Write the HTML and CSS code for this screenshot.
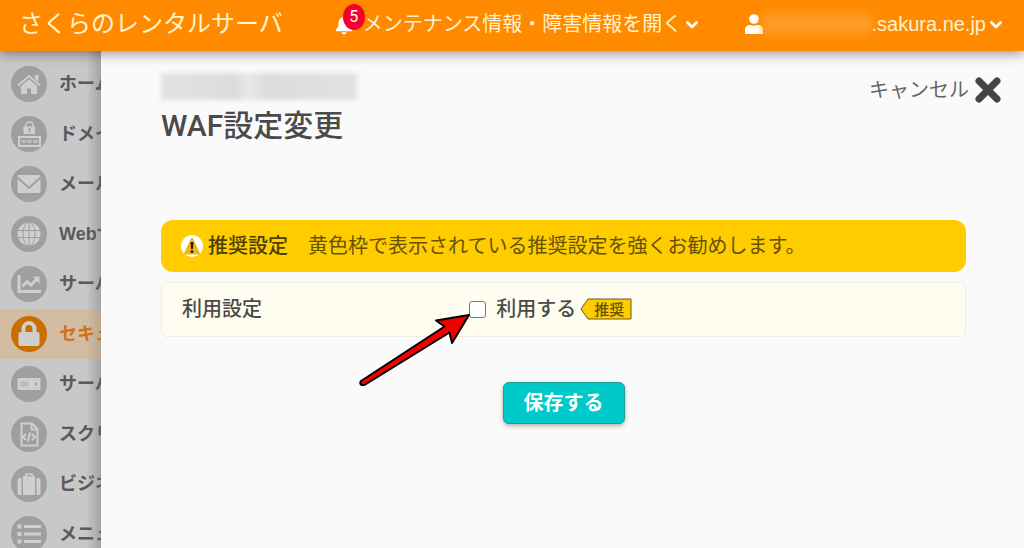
FILE: index.html
```html
<!DOCTYPE html>
<html lang="ja">
<head>
<meta charset="utf-8">
<meta name="viewport" content="width=device-width, initial-scale=1">
<title>WAF設定変更</title>
<link rel="stylesheet" href="styles.css">
</head>
<body>
<header class="topbar">
  <a class="brand" href="#">さくらのレンタルサーバ</a>
  <button class="top-item notice" type="button">
    <span class="bell">
      <svg width="20" height="20" viewBox="0 0 20 22"><path fill="#fff" d="M10 1c1 0 1.600.7 1.600 1.700 2.900.7 4.400 3 4.400 6 0 4 1 5.600 2.800 7.300.7.800.3 1.800-.8 1.800H2c-1.100 0-1.500-1-.8-1.800C3 14.300 4 12.700 4 8.700c0-3 1.500-5.300 4.400-6C8.400 1.700 9 1 10 1zM7.300 19h5.400c0 1.500-1.200 2.500-2.700 2.500S7.300 20.500 7.300 19z"/></svg>
      <span class="badge">5</span>
    </span>
    <span>メンテナンス情報・障害情報を開く</span>
    <svg class="chevron" width="12" height="8" viewBox="0 0 12 8"><path d="M1.500 1.500 6 6l4.500-4.500" fill="none" stroke="#fff" stroke-width="2.800" stroke-linecap="round" stroke-linejoin="round"/></svg>
  </button>
  <button class="top-item account" type="button">
    <svg width="18" height="20" viewBox="0 0 18 20"><circle cx="9" cy="5" r="4.800" fill="#fff"/><path fill="#fff" d="M0 20v-4c0-3 2-5 5-5h.6c2.200 1 4.600 1 6.800 0h.6c3 0 5 2 5 5v4z"/></svg>
    <span class="masked-account"></span>
    <span>.sakura.ne.jp</span>
    <svg class="chevron" width="12" height="8" viewBox="0 0 12 8"><path d="M1.500 1.500 6 6l4.500-4.500" fill="none" stroke="#fff" stroke-width="2.800" stroke-linecap="round" stroke-linejoin="round"/></svg>
  </button>
</header>
<div class="layout">
  <nav class="sidebar">
    <a class="nav-item" href="#"><svg class="nav-icon" viewBox="0 0 36 36"><circle class="disc" cx="18" cy="18" r="18"/><path class="glyph" d="M18 13 26 20v8h-6v-5.500h-4V28h-6v-8z"/><path d="M7 19.500 18 10l11 9.500" class="line"/><path class="glyph" d="M24 9h3.500v7L24 13z"/></svg>ホーム</a>
    <a class="nav-item" href="#"><svg class="nav-icon" viewBox="0 0 36 36"><circle class="disc" cx="18" cy="18" r="18"/><path class="glyph" fill-rule="evenodd" d="M13 10.500h1V9.700a4.500 4.500 0 0 1 9 0v.8h1V18H12.500v-7.500zM15.500 10.500h6V9.700a3 3 0 0 0-6 0zM18.500 12a1.300 1.300 0 0 0-.6 2.400V16.500h1.200V14.400a1.300 1.300 0 0 0-.6-2.400zM7 20h23v11H7zM9 22v7h19v-7z"/><path d="m10.500 24 1 3 1-3 1 3 1-3m2 0 1 3 1-3 1 3 1-3m2 0 1 3 1-3 1 3 1-3" class="thin"/></svg>ドメイン</a>
    <a class="nav-item" href="#"><svg class="nav-icon" viewBox="0 0 36 36"><circle class="disc" cx="18" cy="18" r="18"/><rect class="glyph" x="6.500" y="9" width="23" height="18" rx="1"/><path d="M6.500 11.500 18 22l11.500-10.500" class="cut"/></svg>メール</a>
    <a class="nav-item" href="#"><svg class="nav-icon" viewBox="0 0 36 36"><circle class="disc" cx="18" cy="18" r="18"/><circle class="glyph" cx="18" cy="18" r="11.500"/><path d="M18 6v24M6 14.500h24M6 21.500h24" class="fine-cut"/><ellipse cx="18" cy="18" rx="6" ry="12" class="fine-cut"/></svg>Webサイト</a>
    <a class="nav-item" href="#"><svg class="nav-icon" viewBox="0 0 36 36"><circle class="disc" cx="18" cy="18" r="18"/><path class="bold-line" d="M8 9v16.500h22"/><path d="m11.500 20.500 4.500-5 4 3.500 6-6" class="bold-line"/><path class="glyph" d="M21.500 10.500H28.500v7z"/></svg>サーバ</a>
    <a class="nav-item active" href="#"><svg class="nav-icon" viewBox="0 0 36 36"><circle class="disc" cx="18" cy="18" r="18"/><rect class="glyph" x="7.500" y="16" width="21" height="14" rx="2"/><path d="M12.500 17v-4.500a5.500 5.500 0 0 1 11 0V17" class="lock-line"/></svg>セキュリティ</a>
    <a class="nav-item" href="#"><svg class="nav-icon" viewBox="0 0 36 36"><circle class="disc" cx="18" cy="18" r="18"/><rect class="glyph" x="6.500" y="12" width="23" height="12"/><path class="thin-cut" d="M10 16h3v4h-3zM14.500 16h2.500v4h-2.500z"/><circle cx="25" cy="18" r="1.300" class="disc"/></svg>サーバー</a>
    <a class="nav-item" href="#"><svg class="nav-icon" viewBox="0 0 36 36"><circle class="disc" cx="18" cy="18" r="18"/><path d="M10.500 7.500H21l5.500 5.500v16.500h-16zM20.500 7.500V13.500H26" class="line"/><path d="m15 18-3 3 3 3m6-6 3 3-3 3m-2-7.500-2 9" class="line"/></svg>スクリプト</a>
    <a class="nav-item" href="#"><svg class="nav-icon" viewBox="0 0 36 36"><circle class="disc" cx="18" cy="18" r="18"/><path class="glyph" d="M12 10h2V7.500h8V10h2v19H12zM6.500 14q0-2 2-2h2v17h-2q-2 0-2-2zM25.500 12h2q2 0 2 2v13q0 2-2 2h-2z"/><path class="disc" d="M15.500 9h5v1.200h-5z"/></svg>ビジネス</a>
    <a class="nav-item" href="#"><svg class="nav-icon" viewBox="0 0 36 36"><circle class="disc" cx="18" cy="18" r="18"/><path class="glyph" d="M6.500 8.500h4v4h-4zM6.500 16h4v4h-4zM6.500 23.500h4v4h-4zM13 9h17v3H13zM13 16.500h17v3H13zM13 24h17v3H13z"/></svg>メニュー</a>
  </nav>
  <main class="panel">
    <div class="panel-head">
      <div>
        <div class="masked-domain"></div>
        <h1 class="title">WAF設定変更</h1>
      </div>
      <button class="cancel" type="button">キャンセル
        <svg width="28" height="28" viewBox="0 0 28 28"><path d="m5 5 18 18M23 5 5 23" stroke="#444" stroke-width="7" stroke-linecap="round"/></svg>
      </button>
    </div>
    <div class="recommend">
      <svg width="22" height="24" viewBox="0 0 22 24"><circle cx="11" cy="12" r="11" fill="#fff"/><path d="M11 5 18 19.500H4z" fill="#edb51c" stroke="#edb51c" stroke-width="2" stroke-linejoin="round"/><path d="M9.500 8h3l-.6 7h-1.800z" fill="#2b2300"/><circle cx="11" cy="17.500" r="1.500" fill="#2b2300"/></svg>
      <strong class="recommend-title">推奨設定</strong>
      <span>黄色枠で表示されている推奨設定を強くお勧めします。</span>
    </div>
    <div class="setting">
      <div class="setting-name">利用設定</div>
      <div class="setting-value">
        <input class="check" type="checkbox" id="use-waf">
        <label for="use-waf">利用する</label>
        <span class="tag"><svg class="tag-shape" width="52" height="22" viewBox="0 0 52 22"><path d="M1 11 8 1h43v20H8z" fill="#fc0" stroke="#665a20"/></svg><span class="tag-text">推奨</span></span>
        <svg class="arrow" width="114" height="76" viewBox="0 0 114 76"><path d="M110 5 77 10.500l8.500 6L2 71q-1.500 2 0 3.500 1.500 1.500 3.500.5L90.500 22.500 93 33z" fill="#f00000" stroke="#000" stroke-width="2" stroke-linejoin="round"/></svg>
      </div>
    </div>
    <button class="save" type="button">保存する</button>
  </main>
</div>
</body>
</html>
```
FILE: styles.css
```css
* { box-sizing: border-box; }
body {
  margin: 0;
  height: 100vh;
  display: flex;
  flex-direction: column;
  overflow: hidden;
  background: #fafafa;
  color: #4a4a4a;
  font: 20px/30px Roboto, "Noto Sans CJK JP", sans-serif;
}
button {
  font: inherit;
  color: inherit;
  background: none;
  border: 0;
  padding: 0;
  cursor: pointer;
}
a { color: inherit; text-decoration: none; }
svg { flex: none; }

.topbar {
  position: relative;
  z-index: 2;
  flex: none;
  display: flex;
  align-items: center;
  height: 51px;
  padding: 0 22px 4px 19px;
  background: #ff8a00;
  color: #fff3cf;
  box-shadow: 0 2px 12px rgba(0, 0, 0, .45);
  white-space: nowrap;
}
.brand { font-size: 24px; }
.top-item { display: flex; align-items: center; }
.notice { margin-left: 51px; }
.bell { position: relative; display: flex; margin-right: 9px; padding-top: 3px; }
.badge {
  position: absolute;
  left: 9px;
  top: -8px;
  width: 22px;
  height: 26px;
  border-radius: 50%;
  background: #f5002d;
  color: #fff;
  font-size: 16px;
  line-height: 26px;
  text-align: center;
}
.chevron { margin: 2px 0 0 4px; }
.account { margin-left: auto; font-family: "Liberation Sans", "Noto Sans CJK JP", sans-serif; }
.masked-account {
  width: 108px;
  height: 20px;
  background: #ff9d2b;
  filter: blur(4px);
}

.layout { flex: 1; display: flex; min-height: 0; }
.sidebar {
  flex: none;
  width: 101px;
  padding-top: 8px;
  overflow: hidden;
  background: linear-gradient(90deg, transparent 86px, rgba(0, 0, 0, .18)), #c8c8c8;
}
.nav-item {
  display: flex;
  align-items: center;
  gap: 12px;
  height: 50px;
  padding-left: 11px;
  color: #5a5a5a;
  font-family: "Liberation Sans", "Noto Sans CJK JP", sans-serif;
  font-size: 18px;
  font-weight: 700;
  white-space: nowrap;
}
.nav-icon { width: 36px; height: 36px; }
.nav-item.active {
  background: linear-gradient(90deg, transparent 86px, rgba(0, 0, 0, .12)), #d3bda2;
  color: #d0711a;
}
.disc { fill: #9f9f9f; }
.active .disc { fill: #cc6d00; }
.glyph { fill: #cfcfcf; }
.line, .thin, .bold-line, .lock-line { fill: none; stroke: #cfcfcf; }
.line { stroke-width: 2; }
.thin { stroke-width: 1; }
.bold-line { stroke-width: 3; }
.lock-line { stroke-width: 4; }
.cut, .fine-cut { fill: none; stroke: #9f9f9f; stroke-width: 2; }
.fine-cut { stroke-width: 1; }
.thin-cut { fill: none; stroke: #aaa; stroke-width: 1; }

.panel {
  flex: 1;
  display: flex;
  flex-direction: column;
  padding: 22px 58px 20px 60px;
  background: #fafafa;
}
.panel-head {
  display: flex;
  justify-content: space-between;
  align-items: flex-start;
  margin: 0 -36px 72px 0;
}
.masked-domain {
  width: 196px;
  height: 27px;
  background: linear-gradient(90deg, #e2e2e2, #dcdcdc 38%, #e8e8e8 44%, #dcdcdc 55%, #e2e2e2);
  filter: blur(2px);
}
.title {
  margin: 3px 0 0;
  font-size: 30px;
  font-weight: 500;
  line-height: 45px;
}
.cancel {
  display: flex;
  align-items: center;
  gap: 5px;
  padding-top: 2px;
  color: #666;
}
.recommend {
  display: flex;
  align-items: center;
  padding: 11px 20px;
  border-radius: 12px;
  background: #fc0;
  color: #665200;
}
.recommend-title { margin: 0 20px 0 5px; color: #4c3d00; font-weight: 500; }
.setting {
  display: grid;
  grid-template-columns: 2fr 3fr;
  align-items: center;
  margin-top: 10px;
  padding: 11px 20px 12px;
  border: 1px solid #eeece4;
  border-radius: 6px;
  background: #fffdf0;
  font-weight: 500;
}
.setting-value { position: relative; display: flex; align-items: center; }
.check {
  appearance: none;
  flex: none;
  width: 17px;
  height: 17px;
  margin: 0 10px 0 -18px;
  border: 1px solid #767676;
  border-radius: 3px;
  background: #fff;
}
.tag { position: relative; display: flex; margin-left: 4px; }
.tag-text {
  position: absolute;
  inset: 0 0 0 14px;
  font-size: 15px;
  line-height: 24px;
  color: #665200;
}
.arrow { position: absolute; left: -128px; top: 16px; pointer-events: none; }
.save {
  align-self: center;
  margin-top: 45px;
  padding: 5px 20px;
  border: 1px solid #1a9c9c;
  border-radius: 6px;
  background: #00c9c9;
  color: #fff;
  font-weight: 700;
  box-shadow: 0 2px 4px rgba(0, 0, 0, .3);
}
```
